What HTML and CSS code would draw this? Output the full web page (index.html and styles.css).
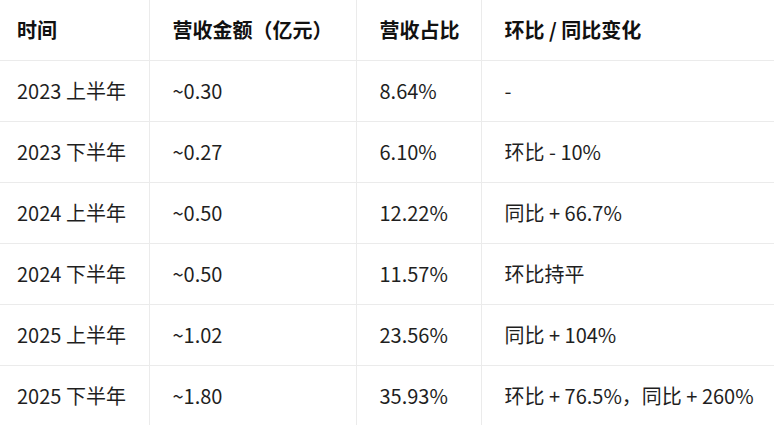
FILE: index.html
```html
<!DOCTYPE html>
<html lang="zh-CN">
<head>
<meta charset="utf-8">
<link rel="stylesheet" href="styles.css">
</head>
<body>
<table class="data">
  <colgroup>
    <col class="c1"><col class="c2"><col class="c3"><col class="c4">
  </colgroup>
  <thead>
    <tr><th>时间</th><th>营收金额（亿元）</th><th>营收占比</th><th>环比 / 同比变化</th></tr>
  </thead>
  <tbody>
    <tr><td>2023 上半年</td><td>~0.30</td><td>8.64%</td><td>-</td></tr>
    <tr><td>2023 下半年</td><td>~0.27</td><td>6.10%</td><td>环比 - 10%</td></tr>
    <tr><td>2024 上半年</td><td>~0.50</td><td>12.22%</td><td>同比 + 66.7%</td></tr>
    <tr><td>2024 下半年</td><td>~0.50</td><td>11.57%</td><td>环比持平</td></tr>
    <tr><td>2025 上半年</td><td>~1.02</td><td>23.56%</td><td>同比 + 104%</td></tr>
    <tr><td>2025 下半年</td><td>~1.80</td><td>35.93%</td><td>环比 + 76.5%，同比 + 260%</td></tr>
  </tbody>
</table>
</body>
</html>
```
FILE: styles.css
```css
html, body {
  margin: 0;
  padding: 0;
  background: #ffffff;
}
body {
  font-family: "Noto Sans CJK SC", "Noto Sans", sans-serif;
  color: #1f1f1f;
  font-size: 20px;
}
.data {
  border-collapse: collapse;
  width: 775px;
  table-layout: fixed;
}
.c1 { width: 149px; }
.c2 { width: 207px; }
.c3 { width: 125px; }
.c4 { width: 294px; }
.data th, .data td {
  height: 60px;
  padding: 0 0 0 23px;
  text-align: left;
  vertical-align: middle;
  white-space: nowrap;
  border-right: 1px solid #ebebeb;
  border-bottom: 1px solid #ebebeb;
  line-height: 1;
}
.data th:first-child, .data td:first-child {
  padding-left: 17px;
}
.data th:last-child, .data td:last-child {
  border-right: none;
}
.data th {
  font-weight: 700;
  color: #111;
}
.data tbody tr:last-child td {
  border-bottom: none;
}
```
